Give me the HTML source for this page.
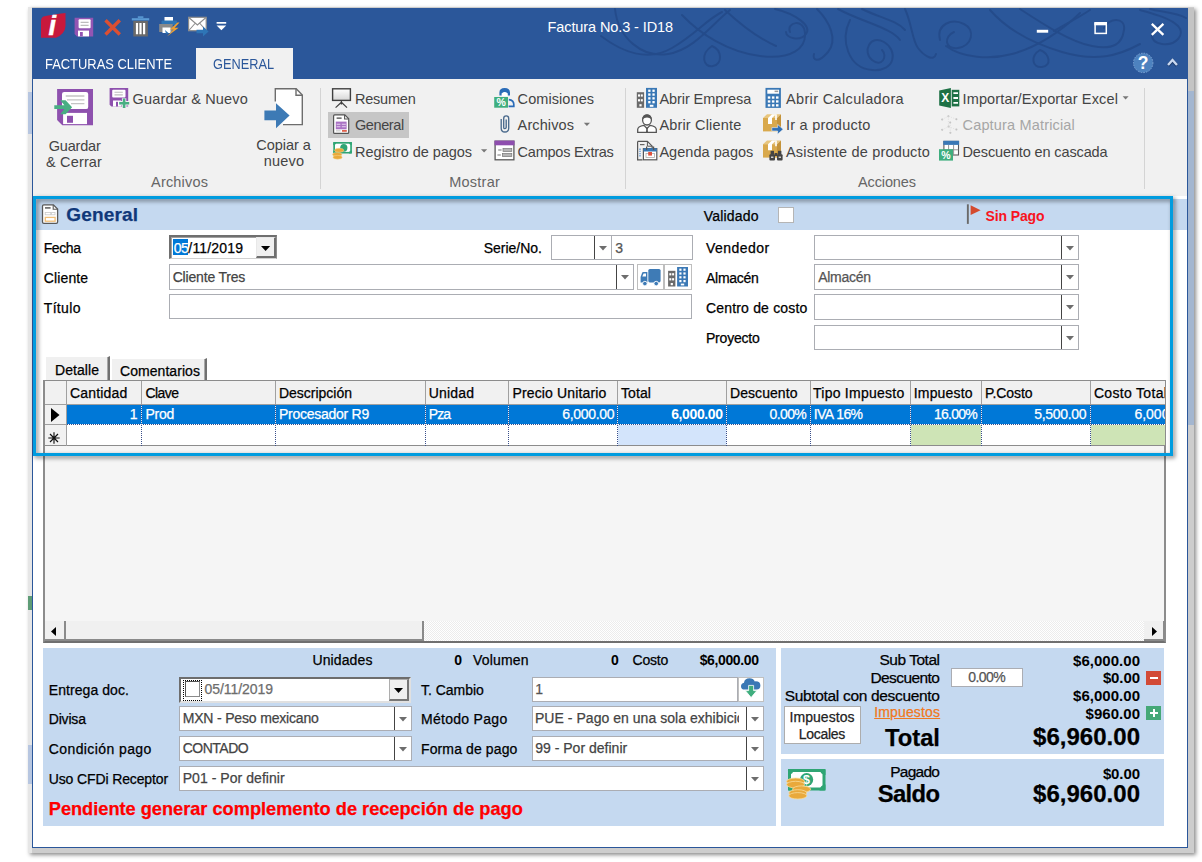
<!DOCTYPE html>
<html lang="es"><head><meta charset="utf-8"><title>Factura No.3 - ID18</title>
<style>
html,body{margin:0;padding:0;background:#fff;}
body{width:1202px;height:862px;overflow:hidden;position:relative;font-family:'Liberation Sans', sans-serif;}
#app{position:absolute;left:0;top:0;width:1202px;height:862px;overflow:hidden;}
#app div,#app span,#app svg{position:absolute;box-sizing:border-box;}
#app span{white-space:pre;line-height:1;}
#app svg{overflow:visible;}
</style></head><body><div id="app">
<div style="left:27.5px;top:6.5px;width:1166px;height:846.5px;background:#CDCDCD;box-shadow:2px 2px 4px rgba(0,0,0,.45);"></div>
<div style="left:27.5px;top:6.5px;width:4.5px;height:846.5px;background:#E6E6E6;"></div>
<div style="left:28px;top:92px;width:4px;height:42px;background:#B7C6E0;"></div>
<div style="left:28px;top:596px;width:4px;height:14px;background:#5E9C76;"></div>
<div style="left:28px;top:745px;width:4px;height:39px;background:#B7C6E0;"></div>
<div style="left:1188px;top:91px;width:5.5px;height:334px;background:#A3B6D0;"></div>
<div style="left:1188px;top:8px;width:5.5px;height:83px;background:#C4C4C4;"></div>
<div style="left:32px;top:8px;width:1156px;height:840px;background:#fff;border:1px solid #2B579A;"></div>
<div style="left:32px;top:8px;width:1156px;height:71px;background:#2B579A;"></div>
<div style="left:33px;top:79px;width:1154px;height:117px;background:#F1F1F1;"></div>
<svg style="left:0;top:0" width="1202" height="80" viewBox="0 0 1202 80"><g fill="none" stroke="#244B8A" stroke-width="2" stroke-linecap="round" opacity=".92">
<path d="M615 9C618 38 642 58 668 54S712 24 730 10"/>
<path d="M601 36C622 52 648 62 672 48S706 20 722 12"/>
<path d="M682 15C700 34 728 52 760 56S806 48 805 33 786 22 790 32"/>
<path d="M712 46C700 54 703 68 713 66S722 50 712 46"/>
<path d="M725 10C742 26 758 38 776 46"/>
<path d="M775 9C796 14 812 26 806 34S786 38 786 32"/>
<path d="M817 9C830 22 838 40 828 52S812 60 814 54"/>
<path d="M850 20C840 40 848 68 872 70S898 50 884 42 862 52 872 60 888 56 882 50"/>
<path d="M838 9C862 22 892 28 900 40"/>
<path d="M862 9C880 18 896 20 905 30"/>
<path d="M905 9C912 24 912 40 918 48S934 62 936 54"/>
<path d="M940 40C936 24 952 18 964 24S972 46 958 48 944 36 954 32"/>
<path d="M946 46C962 58 990 60 1012 54S1056 36 1080 13"/>
<path d="M990 10C1004 26 1028 42 1062 52S1118 56 1140 44"/>
<path d="M1020 9C1040 22 1070 42 1092 46S1122 44 1124 30 1108 18 1104 28"/>
<path d="M1040 50C1030 56 1032 68 1042 67S1050 54 1040 50"/>
<path d="M1054 31C1066 24 1078 18 1090 10"/>
<path d="M1140 10C1154 14 1170 18 1178 26S1176 46 1162 44 1150 30 1160 24"/>
<path d="M1150 9C1160 12 1176 12 1186 18"/>
</g></svg>

<div style="left:196px;top:48px;width:97px;height:31px;background:#F1F1F1;"></div>
<span style="left:45.00px;top:57.40px;font-size:14.3px;color:#fff;transform:scaleX(0.9032);transform-origin:0 0;">FACTURAS CLIENTE</span>
<span style="left:212.75px;top:57.40px;font-size:14.3px;color:#2B579A;transform:scaleX(0.8925);transform-origin:0 0;">GENERAL</span>
<span style="left:547.50px;top:19.53px;font-size:14.5px;color:#fff;letter-spacing:-0.096px;">Factura No.3 - ID18</span>
<svg style="left:0;top:0" width="1202" height="80" viewBox="0 0 1202 80">
<!-- app logo -->
<path d="M43.5 16.5Q52 14.5 65.5 13V26Q65 34 56 37.8H41V21Q41 17.5 43.5 16.5Z" fill="#C8193C"/>
<text x="48.6" y="35" font-family="Liberation Sans, sans-serif" font-style="italic" font-weight="700" font-size="27" fill="#fff" stroke="#fff" stroke-width=".5">i</text>
<!-- save -->
<path d="M74.6 17.8H93.2V36.4H77L74.6 34Z" fill="#9355B3"/>
<rect x="78.6" y="19.2" width="12" height="9" rx="1" fill="#fff"/><path d="M80.6 22.3H88.6M80.6 25.3H88.6" stroke="#BDBDBD" stroke-width="1.2"/>
<rect x="78" y="30.6" width="11" height="5.8" fill="#fff"/><rect x="80" y="32" width="2.8" height="4.4" fill="#9355B3"/>
<!-- X -->
<path d="M105.5 20.2L119.8 34.5M119.8 20.2L105.5 34.5" stroke="#DC4F32" stroke-width="3.4"/>
<!-- trash -->
<rect x="137.8" y="16.3" width="5.6" height="1.6" fill="#5B9BD5"/><rect x="131.8" y="18.2" width="17.4" height="2.2" fill="#5B9BD5"/>
<rect x="133.3" y="20.9" width="14.6" height="15.6" fill="#6A6A6A"/>
<path d="M137 23V34.2M140.5 23V34.2M144.1 23V34.2" stroke="#fff" stroke-width="2.2"/>
<!-- print -->
<rect x="164.5" y="17" width="8.5" height="4.5" fill="#fff"/><rect x="161.5" y="20.5" width="15.5" height="4.6" rx="1" fill="#2E75B6"/>
<rect x="159.2" y="24" width="13.5" height="8" fill="#8A8A8A"/><rect x="162.5" y="27.5" width="8" height="5.5" fill="#fff"/>
<path d="M165 30l4 3.5-3 .3z" fill="#2E75B6"/>
<path d="M177.5 22.5L170 29.5H173.5L167 36.6L178.6 27.8H174.6L179.5 22.5Z" fill="#F0A030"/>
<!-- mail -->
<rect x="188.6" y="17.3" width="17.6" height="13.4" fill="#fff" stroke="#8C8C8C" stroke-width="1.2"/>
<path d="M188.8 17.5L197.4 25L206 17.5M188.8 30.5L195 23.5M206 30.5L200 23.5" fill="none" stroke="#8C8C8C" stroke-width="1.1"/>
<path d="M196.5 29.8H203V26.4L208.6 31.5L203 36.6V33.2H196.5Z" fill="#2E75B6"/>
<!-- qat dropdown -->
<rect x="216.6" y="22" width="9.6" height="1.7" fill="#fff"/><path d="M216.6 25.6H226.2L221.4 30.2Z" fill="#fff"/>
<!-- window buttons -->
<rect x="1036.8" y="29.8" width="11.4" height="2.9" fill="#fff"/>
<rect x="1095.1" y="23.2" width="11.2" height="10.2" fill="none" stroke="#fff" stroke-width="1.5"/><rect x="1094.4" y="22" width="12.6" height="3.3" fill="#fff"/>
<path d="M1151.8 23.8L1163.4 34.8M1163.4 23.8L1151.8 34.8" stroke="#fff" stroke-width="2.3"/>
<!-- help -->
<circle cx="1143.2" cy="62.9" r="9.7" fill="#4D82BF" stroke="#7FA6D6" stroke-width="1" stroke-dasharray="1.5 1.2"/>
<text x="1143.2" y="69.2" text-anchor="middle" font-family="Liberation Sans, sans-serif" font-weight="700" font-size="17.5" fill="#fff">?</text>
<path d="M1168 65.6L1172.5 60.6L1177 65.6" fill="none" stroke="#1d3c6e" stroke-width="3.6" stroke-linejoin="miter"/>
<path d="M1168 65L1172.5 60L1177 65" fill="none" stroke="#C9D8F0" stroke-width="2.4" stroke-linejoin="miter"/>
</svg>

<span style="left:132.50px;top:92.03px;font-size:14.5px;color:#444444;letter-spacing:0.177px;">Guardar &amp; Nuevo</span>
<span style="left:48.66px;top:138.73px;font-size:14.5px;color:#444444;letter-spacing:-0.172px;">Guardar</span>
<span style="left:46.08px;top:154.73px;font-size:14.5px;color:#444444;letter-spacing:0.150px;">&amp; Cerrar</span>
<span style="left:256.23px;top:138.33px;font-size:14.5px;color:#444444;letter-spacing:-0.039px;">Copiar a</span>
<span style="left:263.83px;top:154.43px;font-size:14.5px;color:#444444;letter-spacing:0.157px;">nuevo</span>
<span style="left:151.09px;top:174.73px;font-size:14.5px;color:#666666;letter-spacing:0.174px;">Archivos</span>
<span style="left:449.13px;top:174.73px;font-size:14.5px;color:#666666;letter-spacing:0.263px;">Mostrar</span>
<span style="left:857.95px;top:174.73px;font-size:14.5px;color:#666666;letter-spacing:-0.105px;">Acciones</span>
<div style="left:320px;top:88px;width:1px;height:101px;background:#D4D4D4;"></div>
<div style="left:625px;top:88px;width:1px;height:101px;background:#D4D4D4;"></div>
<div style="left:1143.5px;top:88px;width:1px;height:101px;background:#D4D4D4;"></div>
<div style="left:328px;top:112px;width:81px;height:26px;background:#C6C6C6;"></div>
<span style="left:355.00px;top:91.83px;font-size:14.5px;color:#444444;letter-spacing:-0.223px;">Resumen</span>
<span style="left:355.00px;top:118.13px;font-size:14.5px;color:#444444;letter-spacing:-0.406px;">General</span>
<span style="left:355.00px;top:144.53px;font-size:14.5px;color:#444444;letter-spacing:-0.040px;">Registro de pagos</span>
<span style="left:517.60px;top:91.83px;font-size:14.5px;color:#444444;letter-spacing:0.075px;">Comisiones</span>
<span style="left:517.60px;top:118.13px;font-size:14.5px;color:#444444;letter-spacing:0.111px;">Archivos</span>
<span style="left:517.60px;top:144.53px;font-size:14.5px;color:#444444;letter-spacing:-0.240px;">Campos Extras</span>
<span style="left:659.40px;top:91.83px;font-size:14.5px;color:#444444;letter-spacing:-0.071px;">Abrir Empresa</span>
<span style="left:659.40px;top:118.13px;font-size:14.5px;color:#444444;letter-spacing:0.171px;">Abrir Cliente</span>
<span style="left:659.40px;top:144.53px;font-size:14.5px;color:#444444;letter-spacing:0.039px;">Agenda pagos</span>
<span style="left:786.00px;top:91.83px;font-size:14.5px;color:#444444;letter-spacing:0.351px;">Abrir Calculadora</span>
<span style="left:786.00px;top:118.13px;font-size:14.5px;color:#444444;letter-spacing:0.237px;">Ir a producto</span>
<span style="left:786.00px;top:144.53px;font-size:14.5px;color:#444444;letter-spacing:0.178px;">Asistente de producto</span>
<span style="left:962.50px;top:91.83px;font-size:14.5px;color:#444444;letter-spacing:0.139px;">Importar/Exportar Excel</span>
<span style="left:962.50px;top:118.13px;font-size:14.5px;color:#A6A6A6;letter-spacing:0.171px;">Captura Matricial</span>
<span style="left:962.50px;top:144.53px;font-size:14.5px;color:#444444;letter-spacing:-0.126px;">Descuento en cascada</span>
<svg style="left:0;top:0" width="1202" height="200" viewBox="0 0 1202 200">
<defs><linearGradient id="scr" x1="0" y1="0" x2="0" y2="1"><stop offset="0" stop-color="#fff"/><stop offset="1" stop-color="#D6D6D6"/></linearGradient></defs>
<!-- Guardar & Cerrar (big) -->
<path d="M57.1 89.1H93V125.2H62.3L57.1 120Z" fill="#8E51AE"/>
<rect x="62" y="91.9" width="26.2" height="17.2" rx="2.2" fill="#fff"/>
<path d="M65.7 96H84.4M67 99.9H84.4M71 103.7H84.4" stroke="#C4C4C4" stroke-width="1.3"/>
<rect x="63.1" y="112.9" width="23.9" height="11.2" fill="#fff"/><rect x="67" y="115.8" width="6" height="7" fill="#8E51AE"/>
<path d="M54.3 105.3H64.4L60.2 100.2H65.6L72.1 107.2L65.6 114.2H60.2L64.4 109.1H54.3Z" fill="#49AE83"/>
<!-- Guardar & Nuevo (small) -->
<path d="M109.6 88H128.2V106.5H111.4L109.6 104.7Z" fill="#8E51AE"/>
<rect x="112.2" y="89.7" width="13.3" height="7.9" rx="1" fill="#fff"/><path d="M114.5 92.2H122.8M114.5 94.9H122.8" stroke="#BDBDBD" stroke-width="1.1"/>
<rect x="113" y="100.5" width="8" height="6" fill="#fff"/><rect x="116" y="101.8" width="2" height="4.7" fill="#8E51AE"/>
<path d="M124.1 98.2V108.2M119 103.2H129.3" stroke="#F1F1F1" stroke-width="4.4"/>
<path d="M124.1 98.4V108M119.2 103.2H129.2" stroke="#49AE83" stroke-width="2.6"/>
<!-- Copiar a nuevo -->
<path d="M275.3 101.5V88.8H296.2L302.3 95V124.6H283" fill="#fff" stroke="#6D6D6D" stroke-width="1.4"/>
<path d="M296 88.8V95.2H302.3" fill="none" stroke="#6D6D6D" stroke-width="1.4"/>
<path d="M264.4 110.6H276V103.3L289.6 115.5L276 128.2V120.3H264.4Z" fill="#3D7AB5"/>
<!-- Resumen -->
<rect x="332.6" y="88.8" width="17.8" height="11.6" fill="url(#scr)" stroke="#3F3F3F" stroke-width="1.4"/>
<path d="M341.4 100.6V104.5M341.4 102.3L335.6 107.6M341.4 102.3L347 107.6" stroke="#3F3F3F" stroke-width="1.2" fill="none"/>
<!-- General doc -->
<path d="M334.6 114.9H344.8L348.7 118.8V132.4Q348.7 133.4 347.7 133.4H334.6Q333.6 133.4 333.6 132.4V115.9Q333.6 114.9 334.6 114.9Z" fill="#fff" stroke="#555" stroke-width="1.2"/>
<path d="M344.6 115V119H348.6" fill="none" stroke="#555" stroke-width="1.1"/>
<rect x="335.8" y="121.6" width="10.8" height="7.7" fill="#A971C4"/><path d="M336.6 124.2H340.4M341.8 124.2H345.8M336.6 126.8H340.4M341.8 126.8H345.8" stroke="#E6D3EE" stroke-width="1.1"/>
<rect x="342" y="130" width="4.8" height="1.8" fill="#E0604A"/><rect x="336" y="130" width="4.6" height="1.6" fill="#D8D8D8"/><rect x="336.6" y="117.4" width="5" height="1.5" fill="#666"/>
<!-- Registro de pagos -->
<rect x="333.3" y="142" width="18.6" height="11.6" rx="1" fill="#2FA574"/><rect x="335" y="143.7" width="15.2" height="8.2" fill="#fff"/>
<ellipse cx="343.8" cy="147.8" rx="3.6" ry="3.9" fill="#2FA574"/>
<path d="M333.3 142h3a3 3 0 0 1-3 3zM351.9 142v3a3 3 0 0 1-3-3zM333.3 153.6v-3a3 3 0 0 1 3 3zM351.9 153.6h-3a3 3 0 0 1 3-3z" fill="#2FA574"/>
<g fill="#E9A93B" stroke="#F6D58C" stroke-width=".5"><ellipse cx="339.2" cy="150.3" rx="4.6" ry="2"/><ellipse cx="337.2" cy="154.4" rx="4.6" ry="2"/><ellipse cx="337.6" cy="157.3" rx="4.6" ry="1.9"/></g>
<path d="M481 149.3H487.2L484.1 152.6Z" fill="#777"/>
<!-- Comisiones -->
<path d="M499.4 95.6V92.6Q499.4 88.1 504.7 88.1T510 92.6V95.6Z" fill="#2B6CB8"/><path d="M501.6 96V93.4Q503.4 92 504.7 92T507.8 93.4V96Z" fill="#fff"/>
<path d="M508.8 99.6Q513.8 100 513.8 104.6V106.4H508.6" fill="none" stroke="#2B6CB8" stroke-width="1.7"/>
<rect x="494.2" y="97" width="13.8" height="10.7" fill="#3FAE7E"/>
<text x="501.1" y="106.3" text-anchor="middle" font-family="Liberation Sans, sans-serif" font-size="10.5" font-weight="700" fill="#fff">%</text>
<!-- Archivos clip -->
<path d="M501.2 119V128.2Q501.2 132 504.9 132T508.7 128.2V118.4Q508.7 115.8 506.2 115.8T503.7 118.4V127.4Q503.7 128.6 504.9 128.6T506.2 127.4V119.5" fill="none" stroke="#4A6A8C" stroke-width="1.35"/>
<path d="M583.8 122.8H590L586.9 126.1Z" fill="#777"/>
<!-- Campos Extras -->
<rect x="495.1" y="141.2" width="18.8" height="18.6" fill="#fff" stroke="#5A5A5A" stroke-width="1.3"/><rect x="494.5" y="140.6" width="20" height="4.7" fill="#8E4EAE"/>
<rect x="503" y="148.6" width="8.8" height="2.8" fill="#B5B5B5" stroke="#777" stroke-width=".7"/><rect x="502.4" y="153.5" width="9.4" height="3" fill="#B5B5B5" stroke="#777" stroke-width=".7"/>
<path d="M498.2 150H501.6M497.4 155H500.8" stroke="#777" stroke-width="1.1"/>
<!-- Abrir Empresa -->
<rect x="636.8" y="92.2" width="7.3" height="15.6" fill="#6A6A6A"/>
<g fill="#fff"><rect x="638" y="94.4" width="2" height="2.2"/><rect x="640.8" y="94.4" width="2" height="2.2"/><rect x="638" y="99.2" width="2" height="2.2"/><rect x="640.8" y="99.2" width="2" height="2.2"/><rect x="639.4" y="104.2" width="2.2" height="2.2"/></g>
<rect x="646" y="87.9" width="11" height="19.9" fill="#3A78B5"/>
<g fill="#fff"><rect x="648.2" y="89.6" width="2.3" height="2.3"/><rect x="652.4" y="89.6" width="2.3" height="2.3"/><rect x="648.2" y="93.4" width="2.3" height="2.3"/><rect x="652.4" y="93.4" width="2.3" height="2.3"/><rect x="648.2" y="97.2" width="2.3" height="2.3"/><rect x="652.4" y="97.2" width="2.3" height="2.3"/><rect x="648.2" y="101" width="2.3" height="2.3"/><rect x="652.4" y="101" width="2.3" height="2.3"/><rect x="649.8" y="104.8" width="3.6" height="2"/></g>
<!-- Abrir Cliente -->
<path d="M637.7 132.4V129.6Q637.7 126.4 644 125.4L647 128.6L650 125.4Q656.3 126.4 656.3 129.6V132.4Z" fill="#fff" stroke="#555" stroke-width="1.3"/>
<ellipse cx="647" cy="120" rx="4.4" ry="5" fill="#fff" stroke="#555" stroke-width="1.3"/>
<path d="M642.4 119.4Q642.2 114.4 647 114.4T651.6 119.4Q649.5 117.6 647 117.6T642.4 119.4Z" fill="#555"/>
<path d="M646.4 127.2H647.6L648 132H646Z" fill="#555"/>
<!-- Agenda pagos -->
<path d="M637.6 141.4H647.4L652.2 146.2V150M637.6 141.4V159.8H642.5" fill="none" stroke="#555" stroke-width="1.2"/><path d="M647.4 141.6V146.2H652" fill="none" stroke="#555" stroke-width="1"/>
<path d="M640 144.6H644.5" stroke="#666" stroke-width="1.2"/><path d="M640 148.5V156.5" stroke="#6FA1D6" stroke-width="1.5" stroke-dasharray="1.4 .8"/>
<rect x="643.4" y="148.6" width="13.4" height="11.2" fill="#fff" stroke="#555" stroke-width="1.2"/><rect x="643.4" y="148.2" width="13.4" height="3.3" fill="#3A78B5"/>
<path d="M646.6 146.6V150M653.6 146.6V150" stroke="#555" stroke-width="1.2"/>
<rect x="646" y="153.4" width="8.4" height="4.2" fill="none" stroke="#AAA" stroke-width=".8"/><rect x="648.2" y="152" width="3.8" height="3.6" fill="#E0503C"/>
<!-- Calculadora -->
<rect x="765.5" y="87.9" width="15.4" height="20" fill="#3A78B5"/><rect x="767.3" y="89.7" width="11.8" height="4" fill="#fff"/><rect x="774.6" y="90.6" width="3.6" height="1.5" fill="#9A9A9A"/>
<g fill="#fff"><rect x="767.8" y="96.4" width="2.5" height="2.3"/><rect x="771.9" y="96.4" width="2.5" height="2.3"/><rect x="776" y="96.4" width="2.5" height="2.3"/><rect x="767.8" y="100.3" width="2.5" height="2.3"/><rect x="771.9" y="100.3" width="2.5" height="2.3"/><rect x="776" y="100.3" width="2.5" height="2.3"/><rect x="767.8" y="104.2" width="2.5" height="2.3"/><rect x="771.9" y="104.2" width="2.5" height="2.3"/><rect x="776" y="104.2" width="2.5" height="2.3"/></g>
<!-- boxes -->
<g><path d="M763 118L767 114.2H781L777 118Z" fill="#E8C67E"/><path d="M763 118H777V131.4H763Z" fill="#D9A94C"/><path d="M777 118L781 114.2V127.4L777 131.4Z" fill="#C4933A"/><path d="M768 118L772 114.2H776L772 118V124H768Z" fill="#fff"/><path d="M776 114.2V120" stroke="#fff" stroke-width="1.6"/></g>
<g transform="translate(0 26.2)"><path d="M763 118L767 114.2H781L777 118Z" fill="#E8C67E"/><path d="M763 118H777V131.4H763Z" fill="#D9A94C"/><path d="M777 118L781 114.2V127.4L777 131.4Z" fill="#C4933A"/><path d="M768 118L772 114.2H776L772 118V124H768Z" fill="#fff"/><path d="M776 114.2V120" stroke="#fff" stroke-width="1.6"/></g>
<path d="M771.8 127.6H777.6V124.4L783.2 129.3L777.6 134.2V131H771.8Z" fill="#2E6FB5" stroke="#F1F1F1" stroke-width=".6"/>
<g fill="#444"><rect x="769.4" y="154.2" width="5.6" height="6.4" rx="1"/><rect x="777" y="154.2" width="5.6" height="6.4" rx="1"/><rect x="770.6" y="150.8" width="3.4" height="4"/><rect x="778" y="150.8" width="3.4" height="4"/><rect x="774.6" y="153" width="2.8" height="3"/></g>
<g fill="#F1F1F1"><rect x="771" y="156.6" width="2.4" height="1.2"/><rect x="778.6" y="156.6" width="2.4" height="1.2"/></g>
<!-- Excel -->
<path d="M939.2 90.6L950.9 87.9V108L939.2 105.4Z" fill="#1E7145"/><rect x="951.7" y="89.8" width="7.6" height="16.6" fill="#1E7145"/>
<path d="M953.4 93.2H958M953.4 98H958M953.4 102.8H958" stroke="#fff" stroke-width="1.8"/>
<text x="945.2" y="102.3" text-anchor="middle" font-family="Liberation Sans, sans-serif" font-size="12" font-weight="700" fill="#fff">X</text>
<path d="M1122.6 96.3H1128.6L1125.6 99.6Z" fill="#777"/>
<!-- Captura Matricial -->
<g fill="#BDBDBD"><circle cx="948.4" cy="116.2" r="1"/><circle cx="942.2" cy="119.4" r="1"/><circle cx="956.4" cy="119.2" r="1"/><circle cx="950.2" cy="122.4" r="1"/><circle cx="948.6" cy="126.6" r="1"/><circle cx="942.2" cy="129.8" r="1"/><circle cx="956.4" cy="129.6" r="1"/><circle cx="950.4" cy="132.8" r="1"/></g>
<path d="M948.4 116.2V126.6M942.2 119.4L948.4 116.2L956.4 119.2M942.2 129.8L948.6 126.6L956.4 129.6M950.2 122.4V132.8" stroke="#DADADA" stroke-width=".7" fill="none" stroke-dasharray="1.2 1.2"/>
<!-- Descuento en cascada -->
<rect x="943.9" y="141.4" width="14.6" height="13.6" fill="#fff" stroke="#5A5A5A" stroke-width="1.1"/><rect x="943.3" y="140.8" width="15.8" height="4.1" fill="#3A78B5"/>
<path d="M948.6 145V155M953.6 145V155M944 149.8H958.4" stroke="#8A8A8A" stroke-width=".9"/>
<rect x="939" y="149.2" width="14" height="11.4" fill="#3FAE7E"/>
<text x="946" y="158.8" text-anchor="middle" font-family="Liberation Sans, sans-serif" font-size="10.5" font-weight="700" fill="#fff">%</text>
</svg>

<div style="left:33px;top:199px;width:1154px;height:31px;background:#C5D9F0;"></div>
<span style="left:66.25px;top:205.22px;font-size:19px;font-weight:700;color:#10387A;letter-spacing:0.176px;-webkit-text-stroke:0.25px;">General</span>
<span style="left:703.75px;top:209.15px;font-size:14px;letter-spacing:0.193px;-webkit-text-stroke:0.25px;">Validado</span>
<div style="left:778px;top:207px;width:16px;height:16px;background:#fff;border:1px solid #B5B5B5;"></div>
<span style="left:985.50px;top:209.15px;font-size:14px;font-weight:700;color:#F8141E;letter-spacing:-0.113px;">Sin Pago</span>
<span style="left:43.75px;top:241.15px;font-size:14px;letter-spacing:-0.434px;-webkit-text-stroke:0.25px;">Fecha</span>
<span style="left:43.75px;top:271.15px;font-size:14px;letter-spacing:0.129px;-webkit-text-stroke:0.25px;">Cliente</span>
<span style="left:43.75px;top:301.15px;font-size:14px;letter-spacing:0.331px;-webkit-text-stroke:0.25px;">Título</span>
<span style="left:706.00px;top:241.15px;font-size:14px;letter-spacing:0.443px;-webkit-text-stroke:0.25px;">Vendedor</span>
<span style="left:706.00px;top:271.15px;font-size:14px;letter-spacing:-0.281px;-webkit-text-stroke:0.25px;">Almacén</span>
<span style="left:706.00px;top:301.15px;font-size:14px;letter-spacing:0.177px;-webkit-text-stroke:0.25px;">Centro de costo</span>
<span style="left:706.00px;top:331.15px;font-size:14px;letter-spacing:-0.219px;-webkit-text-stroke:0.25px;">Proyecto</span>
<span style="left:483.75px;top:241.15px;font-size:14px;letter-spacing:-0.012px;-webkit-text-stroke:0.25px;">Serie/No.</span>
<div style="left:168.5px;top:234.8px;width:108.5px;height:24px;background:#fff;border:2px solid #6f6f6f;border-right:1px solid #8c8c8c;border-bottom:1px solid #d0d0d0;box-shadow:inset 1px 1px 0 #A0A0A0;"></div>
<div style="left:173px;top:239px;width:15px;height:16.4px;background:#0078D7;"></div>
<span style="left:173.75px;top:240.95px;font-size:14px;color:#fff;letter-spacing:-0.539px;-webkit-text-stroke:0.25px;">05</span>
<span style="left:188.30px;top:240.95px;font-size:14px;letter-spacing:0.191px;-webkit-text-stroke:0.25px;">/11/2019</span>
<div style="left:256px;top:236.8px;width:20px;height:21px;background:#F0F0F0;border:1px solid #E8E8E8;border-right:2px solid #6f6f6f;border-bottom:2px solid #6f6f6f;"></div>
<svg style="left:261.3px;top:245.5px" width="9.2" height="5"><path d="M0 0h9.2l-4.6 5z" fill="#000"/></svg>
<div style="left:551px;top:235px;width:61px;height:25px;background:#fff;border:1px solid #ABADB3;"></div>
<div style="left:593.5px;top:236px;width:1px;height:23px;background:#444;"></div>
<svg style="left:599px;top:245.5px" width="8" height="4.5"><path d="M0 0h8l-4 4.5z" fill="#6D6D6D"/></svg>
<div style="left:611px;top:235px;width:82px;height:25px;background:#fff;border:1px solid #ABADB3;"></div>
<span style="left:615.20px;top:240.75px;font-size:14px;color:#555;-webkit-text-stroke:0.25px;">3</span>
<div style="left:168.5px;top:264px;width:465.5px;height:26px;background:#fff;border:1px solid #ABADB3;"></div>
<div style="left:616.0px;top:265px;width:1px;height:24px;background:#444;"></div>
<svg style="left:621.0px;top:274.5px" width="8" height="4.5"><path d="M0 0h8l-4 4.5z" fill="#6D6D6D"/></svg>
<span style="left:172.70px;top:269.75px;font-size:14px;color:#444;letter-spacing:-0.184px;-webkit-text-stroke:0.25px;">Cliente Tres</span>
<div style="left:636.5px;top:264px;width:27.5px;height:26px;background:#fff;border:1px solid #BEBEBE;"></div>
<div style="left:663.5px;top:264px;width:28.5px;height:26px;background:#fff;border:1px solid #BEBEBE;"></div>
<div style="left:168.5px;top:294px;width:523.5px;height:25px;background:#fff;border:1px solid #ABADB3;"></div>
<div style="left:814px;top:235px;width:265px;height:25px;background:#fff;border:1px solid #ABADB3;"></div>
<div style="left:1061px;top:236px;width:1px;height:23px;background:#444;"></div>
<svg style="left:1066px;top:245.5px" width="8" height="4.5"><path d="M0 0h8l-4 4.5z" fill="#6D6D6D"/></svg>
<div style="left:814px;top:264px;width:265px;height:26px;background:#fff;border:1px solid #ABADB3;"></div>
<div style="left:1061px;top:265px;width:1px;height:24px;background:#444;"></div>
<svg style="left:1066px;top:274.5px" width="8" height="4.5"><path d="M0 0h8l-4 4.5z" fill="#6D6D6D"/></svg>
<span style="left:818.20px;top:269.75px;font-size:14px;color:#555;letter-spacing:-0.281px;-webkit-text-stroke:0.25px;">Almacén</span>
<div style="left:814px;top:294px;width:265px;height:26px;background:#fff;border:1px solid #ABADB3;"></div>
<div style="left:1061px;top:295px;width:1px;height:24px;background:#444;"></div>
<svg style="left:1066px;top:304.5px" width="8" height="4.5"><path d="M0 0h8l-4 4.5z" fill="#6D6D6D"/></svg>
<div style="left:814px;top:325px;width:265px;height:25px;background:#fff;border:1px solid #ABADB3;"></div>
<div style="left:1061px;top:326px;width:1px;height:23px;background:#444;"></div>
<svg style="left:1066px;top:335.5px" width="8" height="4.5"><path d="M0 0h8l-4 4.5z" fill="#6D6D6D"/></svg>
<svg style="left:0;top:190px" width="1202" height="120" viewBox="0 190 1202 120">
<!-- General header doc icon -->
<path d="M43.8 204.8H53.4L57.6 209V222Q57.6 223.3 56.3 223.3H43.8Q42.5 223.3 42.5 222V206.1Q42.5 204.8 43.8 204.8Z" fill="#fff" stroke="#595959" stroke-width="1.3"/>
<path d="M53.2 205V209.2H57.4" fill="none" stroke="#595959" stroke-width="1.1"/>
<rect x="45" y="207.1" width="5.6" height="1.6" fill="#666"/>
<rect x="45.2" y="212.4" width="5.6" height="2.4" fill="#fff" stroke="#C9C9C9" stroke-width=".8"/><rect x="51.6" y="212.4" width="3.4" height="2.4" fill="#fff" stroke="#C9C9C9" stroke-width=".8"/>
<rect x="45.3" y="217.4" width="9.8" height="3.8" fill="#fff" stroke="#F0BE78" stroke-width="1.3"/>
<!-- flag -->
<rect x="966.9" y="204.3" width="1.9" height="19.6" fill="#6A6A6A"/><path d="M970.6 205.3L980.6 210.2L970.6 215Z" fill="#D44A2E"/>
<!-- truck -->
<rect x="648.3" y="269" width="12.3" height="13.4" rx="1.6" fill="#3E7BB6"/>
<path d="M640.6 282.4V277L642.2 272.6Q642.5 272 643.3 272H647.4V282.4Z" fill="#3E7BB6"/><path d="M642.3 276.4L643.6 273.4H646V276.4Z" fill="#fff"/>
<circle cx="644.9" cy="283.6" r="2.3" fill="#3E7BB6" stroke="#fff" stroke-width=".9"/><circle cx="656.2" cy="283.6" r="2.3" fill="#3E7BB6" stroke="#fff" stroke-width=".9"/>
<!-- buildings -->
<rect x="668.1" y="270.8" width="7.3" height="15.7" fill="#6A6A6A"/>
<g fill="#fff"><rect x="669.3" y="273.2" width="2" height="2.2"/><rect x="672.1" y="273.2" width="2" height="2.2"/><rect x="669.3" y="278.2" width="2" height="2.2"/><rect x="672.1" y="278.2" width="2" height="2.2"/><rect x="670.7" y="283" width="2.2" height="2.2"/></g>
<rect x="677.1" y="267" width="10.9" height="19.5" fill="#3A78B5"/>
<g fill="#fff"><rect x="679.3" y="268.6" width="2.2" height="2.2"/><rect x="683.4" y="268.6" width="2.2" height="2.2"/><rect x="679.3" y="272.4" width="2.2" height="2.2"/><rect x="683.4" y="272.4" width="2.2" height="2.2"/><rect x="679.3" y="276.2" width="2.2" height="2.2"/><rect x="683.4" y="276.2" width="2.2" height="2.2"/><rect x="679.3" y="280" width="2.2" height="2.2"/><rect x="683.4" y="280" width="2.2" height="2.2"/><rect x="680.8" y="283.6" width="3.4" height="1.8"/></g>
</svg>

<div style="left:110.8px;top:358.3px;width:96px;height:21.5px;background:#F0F0F0;border-top:1px solid #fff;border-left:1px solid #fff;border-right:2px solid #707070;box-shadow:inset -1px 0 0 #A8A8A8;"></div>
<div style="left:45px;top:355.8px;width:65px;height:24px;background:#F0F0F0;border-top:1px solid #fff;border-left:1px solid #fff;border-right:2px solid #707070;box-shadow:inset -1px 0 0 #A8A8A8;"></div>
<span style="left:55.00px;top:362.65px;font-size:14px;letter-spacing:0.058px;-webkit-text-stroke:0.25px;">Detalle</span>
<span style="left:120.00px;top:363.55px;font-size:14px;letter-spacing:0.057px;-webkit-text-stroke:0.25px;">Comentarios</span>
<div style="left:43px;top:379.5px;width:1122.5px;height:263px;background:#F5F5F5;border:1px solid #8C8C8C;border-left:2px solid #8c8c8c;border-right:2px solid #8c8c8c;border-bottom:2.5px solid #707070;"></div>
<div style="left:44.5px;top:380.5px;width:1120.5px;height:24px;background:#F1F1F1;border-bottom:1px solid #A0A0A0;"></div>
<div style="left:66px;top:404.5px;width:1099px;height:20px;background:#0078D7;"></div>
<div style="left:66px;top:425px;width:1099px;height:20.5px;background:#fff;"></div>
<div style="left:44.5px;top:404.5px;width:21.5px;height:41px;background:#F1F1F1;"></div>
<div style="left:617.5px;top:425px;width:109px;height:20.5px;background:#D3E4FB;"></div>
<div style="left:910px;top:425px;width:71px;height:20.5px;background:#CEE4B6;"></div>
<div style="left:1090px;top:425px;width:75px;height:20.5px;background:#CEE4B6;"></div>
<div style="left:44.5px;top:424.3px;width:1120.5px;height:1px;background:repeating-linear-gradient(90deg,#3a4f8a 0 1px,#fff 1px 2px);"></div>
<div style="left:44.5px;top:445.3px;width:1120.5px;height:1px;background:#8C8C8C;"></div>
<div style="left:44.5px;top:424.3px;width:21.5px;height:1px;background:#A0A0A0;"></div>
<div style="left:65.5px;top:380.5px;width:1px;height:24px;background:#A0A0A0;"></div>
<div style="left:65.5px;top:404.5px;width:1px;height:41px;background:#A0A0A0;"></div>
<div style="left:141.0px;top:380.5px;width:1px;height:24px;background:#A0A0A0;"></div>
<div style="left:141.0px;top:404.5px;width:1px;height:41px;background:repeating-linear-gradient(#3a4f8a 0 1px,rgba(255,255,255,.85) 1px 2px);"></div>
<div style="left:274.5px;top:380.5px;width:1px;height:24px;background:#A0A0A0;"></div>
<div style="left:274.5px;top:404.5px;width:1px;height:41px;background:repeating-linear-gradient(#3a4f8a 0 1px,rgba(255,255,255,.85) 1px 2px);"></div>
<div style="left:424.5px;top:380.5px;width:1px;height:24px;background:#A0A0A0;"></div>
<div style="left:424.5px;top:404.5px;width:1px;height:41px;background:repeating-linear-gradient(#3a4f8a 0 1px,rgba(255,255,255,.85) 1px 2px);"></div>
<div style="left:508.25px;top:380.5px;width:1px;height:24px;background:#A0A0A0;"></div>
<div style="left:508.25px;top:404.5px;width:1px;height:41px;background:repeating-linear-gradient(#3a4f8a 0 1px,rgba(255,255,255,.85) 1px 2px);"></div>
<div style="left:617.0px;top:380.5px;width:1px;height:24px;background:#A0A0A0;"></div>
<div style="left:617.0px;top:404.5px;width:1px;height:41px;background:repeating-linear-gradient(#3a4f8a 0 1px,rgba(255,255,255,.85) 1px 2px);"></div>
<div style="left:726.0px;top:380.5px;width:1px;height:24px;background:#A0A0A0;"></div>
<div style="left:726.0px;top:404.5px;width:1px;height:41px;background:repeating-linear-gradient(#3a4f8a 0 1px,rgba(255,255,255,.85) 1px 2px);"></div>
<div style="left:809.5px;top:380.5px;width:1px;height:24px;background:#A0A0A0;"></div>
<div style="left:809.5px;top:404.5px;width:1px;height:41px;background:repeating-linear-gradient(#3a4f8a 0 1px,rgba(255,255,255,.85) 1px 2px);"></div>
<div style="left:909.5px;top:380.5px;width:1px;height:24px;background:#A0A0A0;"></div>
<div style="left:909.5px;top:404.5px;width:1px;height:41px;background:repeating-linear-gradient(#3a4f8a 0 1px,rgba(255,255,255,.85) 1px 2px);"></div>
<div style="left:980.5px;top:380.5px;width:1px;height:24px;background:#A0A0A0;"></div>
<div style="left:980.5px;top:404.5px;width:1px;height:41px;background:repeating-linear-gradient(#3a4f8a 0 1px,rgba(255,255,255,.85) 1px 2px);"></div>
<div style="left:1089.5px;top:380.5px;width:1px;height:24px;background:#A0A0A0;"></div>
<div style="left:1089.5px;top:404.5px;width:1px;height:41px;background:repeating-linear-gradient(#3a4f8a 0 1px,rgba(255,255,255,.85) 1px 2px);"></div>
<span style="left:70.00px;top:386.45px;font-size:14px;letter-spacing:0.182px;-webkit-text-stroke:0.25px;">Cantidad</span>
<span style="left:145.50px;top:386.45px;font-size:14px;letter-spacing:-0.559px;-webkit-text-stroke:0.25px;">Clave</span>
<span style="left:279.00px;top:386.45px;font-size:14px;letter-spacing:-0.013px;-webkit-text-stroke:0.25px;">Descripción</span>
<span style="left:428.75px;top:386.45px;font-size:14px;letter-spacing:0.188px;-webkit-text-stroke:0.25px;">Unidad</span>
<span style="left:512.50px;top:386.45px;font-size:14px;letter-spacing:0.145px;-webkit-text-stroke:0.25px;">Precio Unitario</span>
<span style="left:621.00px;top:386.45px;font-size:14px;letter-spacing:0.084px;-webkit-text-stroke:0.25px;">Total</span>
<span style="left:730.00px;top:386.45px;font-size:14px;letter-spacing:0.062px;-webkit-text-stroke:0.25px;">Descuento</span>
<span style="left:813.00px;top:386.45px;font-size:14px;letter-spacing:0.254px;-webkit-text-stroke:0.25px;">Tipo Impuesto</span>
<span style="left:913.75px;top:386.45px;font-size:14px;letter-spacing:0.176px;-webkit-text-stroke:0.25px;">Impuesto</span>
<span style="left:985.00px;top:386.45px;font-size:14px;letter-spacing:-0.071px;-webkit-text-stroke:0.25px;">P.Costo</span>
<div style="left:1090px;top:381px;width:74.5px;height:23px;overflow:hidden;"><span style="left:3.9px;top:5.45px;font-size:14px;letter-spacing:.32px;-webkit-text-stroke:.25px">Costo Total</span></div>
<span style="left:129.70px;top:407.35px;font-size:14px;color:#fff;-webkit-text-stroke:0.25px;">1</span>
<span style="left:145.50px;top:407.35px;font-size:14px;color:#fff;letter-spacing:-0.270px;-webkit-text-stroke:0.25px;">Prod</span>
<span style="left:279.00px;top:407.35px;font-size:14px;color:#fff;letter-spacing:-0.261px;-webkit-text-stroke:0.25px;">Procesador R9</span>
<span style="left:428.75px;top:407.35px;font-size:14px;color:#fff;letter-spacing:-0.900px;-webkit-text-stroke:0.25px;">Pza</span>
<span style="left:562.19px;top:407.35px;font-size:14px;color:#fff;letter-spacing:-0.312px;-webkit-text-stroke:0.25px;">6,000.00</span>
<span style="left:671.21px;top:407.35px;font-size:14px;font-weight:700;color:#fff;letter-spacing:-0.388px;">6,000.00</span>
<span style="left:769.58px;top:407.35px;font-size:14px;color:#fff;letter-spacing:-0.621px;-webkit-text-stroke:0.25px;">0.00%</span>
<span style="left:813.80px;top:407.35px;font-size:14px;color:#fff;letter-spacing:-0.567px;-webkit-text-stroke:0.25px;">IVA 16%</span>
<span style="left:933.95px;top:407.35px;font-size:14px;color:#fff;letter-spacing:-0.747px;-webkit-text-stroke:0.25px;">16.00%</span>
<span style="left:1034.19px;top:407.35px;font-size:14px;color:#fff;letter-spacing:-0.312px;-webkit-text-stroke:0.25px;">5,500.00</span>
<div style="left:1090px;top:405px;width:74.5px;height:19px;overflow:hidden;"><span style="left:44.4px;top:2.35px;font-size:14px;color:#fff;-webkit-text-stroke:.25px">6,000.00</span></div>
<svg style="left:51px;top:408px" width="9" height="14"><path d="M0 0l8.5 7L0 14z" fill="#000"/></svg>
<svg style="left:48.2px;top:432px" width="12" height="12" viewBox="0 0 12 12"><path d="M6 .3V11.7M.3 6H11.7M2 2L10 10M10 2L2 10" stroke="#111" stroke-width="1.15" fill="none"/></svg>
<div style="left:44.5px;top:621px;width:1120.5px;height:19.5px;background:#F3F3F3;background-image:repeating-conic-gradient(#fff 0 25%,#ECECEC 0 50%);background-size:2px 2px;"></div>
<div style="left:44.5px;top:621px;width:21px;height:19.5px;background:#F0F0F0;border-right:2px solid #8a8a8a;border-bottom:2px solid #8a8a8a;"></div>
<div style="left:65.5px;top:621px;width:358.5px;height:19.5px;background:#F0F0F0;border-right:2px solid #8a8a8a;border-bottom:2px solid #8a8a8a;"></div>
<div style="left:1143.5px;top:621px;width:21px;height:19.5px;background:#F0F0F0;border-right:2px solid #8a8a8a;border-bottom:2px solid #8a8a8a;"></div>
<svg style="left:50.5px;top:626.5px" width="5" height="9"><path d="M5 0v9L0 4.5z" fill="#000"/></svg>
<svg style="left:1151.5px;top:626.5px" width="5" height="9"><path d="M0 0v9l5-4.5z" fill="#000"/></svg>
<div style="left:32.8px;top:196px;width:1140.5px;height:259.9px;border:3.4px solid #009CDF;filter:drop-shadow(2.6px 2.6px 2.2px rgba(0,0,0,.5));"></div>
<div style="left:43.3px;top:648px;width:732.5px;height:178px;background:#C5D9F0;"></div>
<div style="left:780.8px;top:648px;width:383.7px;height:106.3px;background:#C5D9F0;"></div>
<div style="left:780.8px;top:759.3px;width:383.7px;height:66.7px;background:#C5D9F0;"></div>
<span style="left:312.50px;top:652.65px;font-size:14px;letter-spacing:0.105px;-webkit-text-stroke:0.25px;">Unidades</span>
<span style="left:454.20px;top:652.65px;font-size:14px;font-weight:700;">0</span>
<span style="left:473.00px;top:652.65px;font-size:14px;letter-spacing:0.181px;-webkit-text-stroke:0.25px;">Volumen</span>
<span style="left:610.95px;top:652.65px;font-size:14px;font-weight:700;">0</span>
<span style="left:632.50px;top:652.65px;font-size:14px;letter-spacing:-0.216px;-webkit-text-stroke:0.25px;">Costo</span>
<span style="left:699.63px;top:652.65px;font-size:14px;font-weight:700;letter-spacing:-0.366px;">$6,000.00</span>
<span style="left:48.75px;top:682.75px;font-size:14px;letter-spacing:0.072px;-webkit-text-stroke:0.25px;">Entrega doc.</span>
<span style="left:48.75px;top:712.25px;font-size:14px;letter-spacing:-0.188px;-webkit-text-stroke:0.25px;">Divisa</span>
<span style="left:48.75px;top:742.45px;font-size:14px;letter-spacing:0.407px;-webkit-text-stroke:0.25px;">Condición pago</span>
<span style="left:48.75px;top:772.25px;font-size:14px;letter-spacing:-0.125px;-webkit-text-stroke:0.25px;">Uso CFDi Receptor</span>
<span style="left:421.00px;top:682.75px;font-size:14px;letter-spacing:-0.031px;-webkit-text-stroke:0.25px;">T. Cambio</span>
<span style="left:421.00px;top:712.25px;font-size:14px;letter-spacing:0.291px;-webkit-text-stroke:0.25px;">Método Pago</span>
<span style="left:421.00px;top:742.45px;font-size:14px;letter-spacing:0.119px;-webkit-text-stroke:0.25px;">Forma de pago</span>
<div style="left:179px;top:677px;width:231.5px;height:25.5px;background:#fff;border:2px solid #6d6d6d;border-right-color:#e0e0e0;border-bottom-color:#e0e0e0;"></div>
<div style="left:182.5px;top:680px;width:19.5px;height:21px;border:1px dotted #000;"></div>
<div style="left:184.5px;top:681px;width:15px;height:16px;background:#fff;border:1px solid #8a8a8a;border-top-color:#555;border-left-color:#555;"></div>
<span style="left:204.50px;top:682.15px;font-size:14px;color:#6D6D6D;letter-spacing:-0.053px;-webkit-text-stroke:0.25px;">05/11/2019</span>
<div style="left:388.5px;top:679px;width:20.5px;height:22px;background:#F0F0F0;border:1px solid #ADADAD;border-right:2px solid #777;border-bottom:2px solid #777;"></div>
<svg style="left:394px;top:688px" width="9" height="5"><path d="M0 0h9l-4.5 5z" fill="#000"/></svg>
<div style="left:179px;top:706px;width:232.5px;height:25px;background:#fff;border:1px solid #ABADB3;"></div>
<div style="left:393.5px;top:707px;width:1px;height:23px;background:#444;"></div>
<svg style="left:398.5px;top:716.5px" width="8" height="4.5"><path d="M0 0h8l-4 4.5z" fill="#6D6D6D"/></svg>
<span style="left:182.70px;top:711.25px;font-size:14px;color:#444;letter-spacing:-0.173px;-webkit-text-stroke:0.25px;">MXN - Peso mexicano</span>
<div style="left:179px;top:736px;width:232.5px;height:25px;background:#fff;border:1px solid #ABADB3;"></div>
<div style="left:393.5px;top:737px;width:1px;height:23px;background:#444;"></div>
<svg style="left:398.5px;top:746.5px" width="8" height="4.5"><path d="M0 0h8l-4 4.5z" fill="#6D6D6D"/></svg>
<span style="left:182.70px;top:741.25px;font-size:14px;color:#444;letter-spacing:-0.496px;-webkit-text-stroke:0.25px;">CONTADO</span>
<div style="left:179px;top:766px;width:585px;height:25px;background:#fff;border:1px solid #ABADB3;"></div>
<div style="left:746px;top:767px;width:1px;height:23px;background:#444;"></div>
<svg style="left:751px;top:776.5px" width="8" height="4.5"><path d="M0 0h8l-4 4.5z" fill="#6D6D6D"/></svg>
<span style="left:182.70px;top:771.25px;font-size:14px;color:#444;letter-spacing:0.049px;-webkit-text-stroke:0.25px;">P01 - Por definir</span>
<div style="left:531.5px;top:677px;width:206px;height:24.5px;background:#fff;border:1px solid #ABADB3;"></div>
<span style="left:535.20px;top:682.25px;font-size:14px;color:#555;-webkit-text-stroke:0.25px;">1</span>
<div style="left:737.5px;top:677px;width:26.5px;height:24.5px;background:#fff;border:1px solid #C0C0C0;"></div>
<div style="left:531.5px;top:706px;width:232.5px;height:25px;background:#fff;border:1px solid #ABADB3;"></div>
<span style="left:535.00px;top:711.35px;font-size:14px;color:#444;letter-spacing:0.035px;-webkit-text-stroke:0.25px;">PUE - Pago en una sola exhibición</span>
<div style="left:739px;top:707px;width:24px;height:23px;background:#fff;"></div>
<div style="left:745.5px;top:707px;width:1px;height:23px;background:#444;"></div>
<svg style="left:750.5px;top:716.5px" width="8" height="4.5"><path d="M0 0h8l-4 4.5z" fill="#6D6D6D"/></svg>
<div style="left:531.5px;top:736px;width:232.5px;height:25px;background:#fff;border:1px solid #ABADB3;"></div>
<div style="left:746.0px;top:737px;width:1px;height:23px;background:#444;"></div>
<svg style="left:751.0px;top:746.5px" width="8" height="4.5"><path d="M0 0h8l-4 4.5z" fill="#6D6D6D"/></svg>
<span style="left:535.20px;top:741.25px;font-size:14px;color:#444;letter-spacing:0.011px;-webkit-text-stroke:0.25px;">99 - Por definir</span>
<span style="left:48.75px;top:799.59px;font-size:18.2px;font-weight:700;color:#FF0000;-webkit-text-stroke:0.25px;">Pendiente generar complemento de recepción de pago</span>
<span style="left:879.52px;top:652.38px;font-size:15.5px;letter-spacing:-0.484px;-webkit-text-stroke:0.25px;">Sub Total</span>
<span style="left:870.43px;top:669.88px;font-size:15.5px;letter-spacing:-0.568px;-webkit-text-stroke:0.25px;">Descuento</span>
<span style="left:784.68px;top:687.68px;font-size:15.5px;letter-spacing:-0.319px;-webkit-text-stroke:0.25px;">Subtotal con descuento</span>
<span style="left:874.16px;top:705.45px;font-size:14px;color:#F07820;letter-spacing:0.156px;-webkit-text-stroke:0.25px;text-decoration:underline;">Impuestos</span>
<span style="left:884.98px;top:725.55px;font-size:23.8px;font-weight:700;letter-spacing:-0.016px;-webkit-text-stroke:0.25px;">Total</span>
<span style="left:1033.02px;top:725.38px;font-size:24px;font-weight:700;letter-spacing:0.024px;-webkit-text-stroke:0.25px;">$6,960.00</span>
<span style="left:1073.03px;top:652.80px;font-size:15px;font-weight:700;letter-spacing:0.030px;">$6,000.00</span>
<span style="left:1102.89px;top:670.30px;font-size:15px;font-weight:700;letter-spacing:-0.109px;">$0.00</span>
<span style="left:1073.03px;top:688.10px;font-size:15px;font-weight:700;letter-spacing:0.030px;">$6,000.00</span>
<span style="left:1085.54px;top:705.50px;font-size:15px;font-weight:700;letter-spacing:0.038px;">$960.00</span>
<div style="left:950.7px;top:668px;width:72.5px;height:19px;background:#fff;border:1px solid #ABADB3;"></div>
<span style="left:968.23px;top:670.45px;font-size:14px;color:#555;letter-spacing:-0.541px;-webkit-text-stroke:0.25px;">0.00%</span>
<div style="left:1146px;top:670.7px;width:14.8px;height:14.8px;background:#D24A36;"></div>
<div style="left:1149.5px;top:677.2px;width:8px;height:2px;background:#fff;"></div>
<div style="left:1146px;top:705.7px;width:14.8px;height:14.8px;background:#45A877;"></div>
<div style="left:1149.5px;top:712.2px;width:8px;height:2px;background:#fff;"></div>
<div style="left:1152.5px;top:709.2px;width:2px;height:8px;background:#fff;"></div>
<div style="left:783.7px;top:706px;width:77px;height:38px;background:#fff;border:1px solid #ADADAD;"></div>
<span style="left:789.52px;top:710.15px;font-size:14px;color:#222;letter-spacing:0.045px;-webkit-text-stroke:0.25px;">Impuestos</span>
<span style="left:798.84px;top:726.65px;font-size:14px;color:#222;letter-spacing:-0.324px;-webkit-text-stroke:0.25px;">Locales</span>
<span style="left:890.26px;top:764.38px;font-size:15.5px;letter-spacing:-0.742px;-webkit-text-stroke:0.25px;">Pagado</span>
<span style="left:1102.89px;top:766.00px;font-size:15px;font-weight:700;letter-spacing:-0.109px;">$0.00</span>
<span style="left:877.84px;top:782.05px;font-size:23.8px;font-weight:700;letter-spacing:-0.659px;-webkit-text-stroke:0.25px;">Saldo</span>
<span style="left:1033.02px;top:781.88px;font-size:24px;font-weight:700;letter-spacing:0.024px;-webkit-text-stroke:0.25px;">$6,960.00</span>
<svg style="left:0;top:660px" width="1202" height="150" viewBox="0 660 1202 150">
<!-- cloud download -->
<path d="M744.6 689.6Q741 689.6 741 686.2Q741 683.4 744 682.8Q744.4 678.2 749.6 678.2Q753.4 678.2 754.8 681.4Q760.4 681 760.4 685.6Q760.4 689.6 756.6 689.6Z" fill="#3A78B5"/>
<path d="M748.6 685.4H753.6V690.6H756.9L751.1 697.6L745.3 690.6H748.6Z" fill="#3FAE7E" stroke="#fff" stroke-width=".8"/>
<!-- money -->
<rect x="788" y="769" width="37.5" height="21.5" rx="1.5" fill="#2FA574"/><rect x="791" y="772" width="31.5" height="15.5" fill="#fff"/>
<path d="M788 769h6a6 6 0 0 1-6 6zM825.5 769v6a6 6 0 0 1-6-6zM825.5 790.500v-6a6 6 0 0 0-6 6zM788 790.500h6a6 6 0 0 0-6-6z" fill="#2FA574"/>
<circle cx="806.6" cy="779.7" r="6.6" fill="#2FA574"/>
<text x="806.6" y="784.2" text-anchor="middle" font-family="Liberation Sans, sans-serif" font-size="12.5" font-weight="700" fill="#fff">$</text>
<g fill="#E9A93B" stroke="#F8DC9A" stroke-width=".8"><ellipse cx="795.6" cy="781.4" rx="9" ry="3.3"/><ellipse cx="795.6" cy="784.6" rx="9" ry="3.3"/><ellipse cx="801.6" cy="789.2" rx="9" ry="3.3"/><ellipse cx="797.8" cy="793" rx="9" ry="3.3"/><ellipse cx="797.8" cy="795.8" rx="9" ry="3.2"/></g>
</svg>

</div></body></html>
